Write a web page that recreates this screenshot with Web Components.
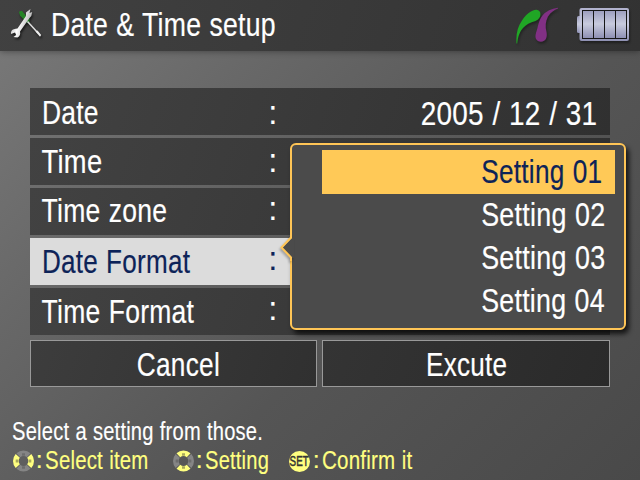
<!DOCTYPE html>
<html lang="en"><head><meta charset="utf-8"><title>Date &amp; Time setup</title>
<style>html,body{margin:0;padding:0;width:640px;height:480px;overflow:hidden;background:#555}</style></head>
<body><setup-screen></setup-screen>
<script>
const define=(name,html,connected)=>{
  const t=document.createElement('template');t.innerHTML=html;
  customElements.define(name,class extends HTMLElement{
    constructor(){super();this.attachShadow({mode:'open'}).append(t.content.cloneNode(true));}
    connectedCallback(){if(connected)connected(this,this.shadowRoot);}
  });
};

// Text condensed horizontally so that its ink fills the given width.
const ctx=document.createElement('canvas').getContext('2d');
define('narrow-text',`<style>
:host{display:block;flex:none;font-family:"Liberation Sans",Arial,sans-serif;white-space:pre;line-height:40px;height:40px}
span{display:block;width:max-content;transform-origin:0 0;-webkit-text-stroke:var(--stroke,0.2px) currentColor}
</style><span></span>`,(el,root)=>{
  const s=root.querySelector('span'),size=+(el.getAttribute('size')||34),w=+el.getAttribute('w');
  const text=el.getAttribute('text'),track=text==='SET'?0:size*.01,gap=size*.02;
  s.textContent=text;s.style.fontSize=size+'px';s.style.letterSpacing=track+'px';s.style.wordSpacing=gap+'px';
  ctx.font=size*10+'px "Liberation Sans"';
  const m=ctx.measureText(text),left=m.actualBoundingBoxLeft/10,right=m.actualBoundingBoxRight/10;
  const natural=right+left+track*(text.length-1)+gap*(text.split(' ').length-1),k=w/natural;
  el.style.width=w+'px';
  s.style.transform=`translateX(${left*k}px) scaleX(${k})`;
});

define('tools-icon',`<style>:host{display:block;width:36px;height:32px}svg{display:block;filter:drop-shadow(1px 2px 1px #0009)}</style>
<svg width="36" height="32" viewBox="0 0 36 32"><defs><linearGradient id="m" x2="1" y2=".4"><stop stop-color="#999"/><stop offset=".5" stop-color="#fff"/><stop offset="1" stop-color="#aaa"/></linearGradient></defs>
<path d="M11 5Q12 3.500 14 4L21 12L18 15L12 8.500Z" fill="#248324"/><path d="M17 12L21.500 11.500L21.500 15L18.500 16Z" fill="#1d7a20"/>
<path d="M19.500 14.500L30 26" stroke="#ddd" stroke-width="1.600"/><path d="M27.500 24.500L29.500 23.500L33.200 28L32 29.700Z" fill="#eee"/>
<path d="M18 9L18 5.500L22.500 2L21.500 6L24.200 5Q24 9 21.500 11L12 24.500Q13 28.500 9.500 30.500L5.500 30L8.200 28L7 25.500L3 27Q2.500 24 5 22.500Q8 21.500 9.500 21.500Z" fill="url(#m)"/></svg>`);

define('brand-mark',`<style>:host{display:block;width:46px;height:38px}svg{display:block;overflow:visible;filter:drop-shadow(1px 2px 1px #0005)}</style>
<svg width="46" height="38" viewBox="0 0 46 38"><path d="M1.500 37.500C.8 28 2.500 21 7 14.500C11 8.500 16 4 21.500 3.800C27 4.200 27 12.500 20.500 15C15 16.500 11 18.500 8 22C4 27 3 31 2.200 37.500Z" fill="#20a625"/>
<path d="M43 1.800Q33 3 27.500 9.500C23.500 14.500 23 21.500 21 27C19.500 31.500 21 35.500 26 35.800C31 35.500 32.500 31 31.500 26C30 20.500 30.500 15.500 33 10.500C36 6 39 4 43 2.500Z" fill="#813084"/></svg>`);

define('battery-icon',`<style>:host{display:block;width:54px;height:36px}svg{display:block;filter:drop-shadow(1px 2px 1px #0006)}</style>
<svg width="54" height="36" viewBox="0 0 54 36"><defs><linearGradient id="b" x2="0" y2="1"><stop stop-color="#b0b1cd"/><stop offset=".5" stop-color="#c8cadf"/><stop offset="1" stop-color="#8e90b2"/></linearGradient>
<linearGradient id="c" x2="0" y2="1"><stop stop-color="#9c9dbe"/><stop offset=".48" stop-color="#c8cbdd"/><stop offset="1" stop-color="#8d8fb3"/></linearGradient></defs>
<rect x="1" y="10" width="5" height="17" rx="1.500" fill="url(#c)"/><rect x="3.500" y="2" width="49.500" height="33" rx="2" fill="url(#b)"/>
<rect x="6.500" y="4.500" width="44" height="28" fill="url(#c)" stroke="#171717"/><path d="M17.500 4.500v28M28.500 4.500v28M39.500 4.500v28" stroke="#171717"/></svg>`);

define('dial-icon',`<style>:host{display:block;width:22px;height:22px}svg{display:block}:host([vertical]) g{transform:rotate(90deg);transform-origin:10.5px 11px}circle{fill:none;stroke-width:5.6}</style>
<svg width="22" height="22" viewBox="0 0 22 22"><g>
<circle cx="10.500" cy="11" r="7.700" pathLength="360" stroke="#ffff80" stroke-dasharray="84 96" stroke-dashoffset="42"/>
<circle cx="10.500" cy="11" r="7.700" pathLength="360" stroke="#858585" stroke-dasharray="84 96" stroke-dashoffset="-48"/>
<path d="M2.700 9.500h2.500v3h-2.500zM15.800 9.500h2.500v3h-2.500z" fill="#a8a85c"/><path d="M9 3.200h3v2.500h-3zM9 16.300h3v2.500h-3z" fill="#6d6d6d"/></g></svg>`);

define('set-icon',`<style>:host{display:grid;width:21px;height:21px;border-radius:50%;background:#ffff80;color:#343434;align-content:center;justify-content:center;--stroke:.5px}narrow-text{height:21px;line-height:21px}</style>
<narrow-text text="SET" size="14.5" w="18.500"></narrow-text>`);

define('menu-row',`<style>
:host{display:flex;height:47px;box-sizing:border-box;padding:0 12px;background:linear-gradient(110deg,#424242,#303030);color:#fff}
:host([selected]){background:#dcdcdc;color:#0d2358}
.label{width:229.300px;flex:none;padding-top:var(--ly,4px)}.colon{width:4px;padding-top:var(--cy,4px)}.value{margin-left:auto;padding-top:5px}
</style><div class="label"><slot></slot></div><div class="colon"><narrow-text text=":" w="3.4"></narrow-text></div><div class="value"><slot name="value"></slot></div>`);

define('push-button',`<style>:host{display:flex;justify-content:center;height:47px;box-sizing:border-box;padding-top:3px;border:1px solid #999;background:linear-gradient(110deg,var(--a),var(--b));color:#fff}</style><slot></slot>`);

define('option-row',`<style>:host{display:flex;height:43px;padding:1px 0 0 160px;box-sizing:border-box;color:#fff}:host([active]){background:#ffc957;color:#0d2358;height:44px;margin-bottom:-1px}</style><slot></slot>`);

define('option-popup',`<style>
:host{display:block;position:absolute;left:290px;top:143px;width:336px;height:187px;box-sizing:border-box;border:2px solid #ffc556;border-radius:6px;background:#4b4b4b;box-shadow:3px 4px 5px #000b;padding:5px 9px 0 30px}
svg{position:absolute;left:-12px;top:90px;filter:drop-shadow(-1px 2px 1px #0004)}
</style><svg width="14" height="26" viewBox="0 0 14 26"><path d="M12 3L2 13L12 23H14V3Z" fill="#4b4b4b"/><path d="M11 0V2.500L1.500 12.500L11 22.500V26" stroke="#ffc556" stroke-width="2" fill="none"/></svg><slot></slot>`);

define('hint-item',`<style>:host{display:flex;align-items:flex-start;color:#ffff80}.colon{width:3px;margin-left:var(--cx,3px)}.label{margin-left:5.500px}.icon{padding-top:var(--iy,10px)}</style>
<div class="icon"><slot name="icon"></slot></div><narrow-text class="colon" text=":" size="24" w="2.500"></narrow-text><div class="label"><slot></slot></div>`);

define('setup-screen',`<style>
:host{display:flex;flex-direction:column;position:relative;width:640px;height:480px;overflow:hidden;background:linear-gradient(135deg,#7a7a7a 0%,#686868 28%,#555 60%,#494949 100%)}
header{display:flex;height:51px;flex:none;background:linear-gradient(110deg,#414141,#323232);color:#fff;box-shadow:0 1px 6px #0005}
header tools-icon{margin:7px 0 0 8px}header narrow-text{margin:4px 0 0 9px}
header brand-mark{margin:6px 0 0 auto}header battery-icon{margin:6px 10px 0 15px}
main{display:flex;flex-direction:column;gap:3px;padding:37px 30px 0}
.buttons{display:grid;grid-template-columns:287px 288px;gap:5px;margin-top:2px}
footer{padding:24px 0 0 13px;color:#fff;--stroke:.15px}
.hints{display:flex;margin-top:-11px}
</style>
<header><tools-icon></tools-icon><narrow-text text="Date &amp; Time setup" w="222"></narrow-text><brand-mark></brand-mark><battery-icon></battery-icon></header>
<main>
<menu-row><narrow-text text="Date" w="53.500" style="margin-left:1.500px"></narrow-text><narrow-text slot="value" text="2005 / 12 / 31" w="174" style="margin-right:2px"></narrow-text></menu-row>
<menu-row style="--ly:3px;--cy:2px"><narrow-text text="Time" w="59"></narrow-text></menu-row>
<menu-row style="--ly:2px;--cy:0px"><narrow-text text="Time zone" w="124"></narrow-text></menu-row>
<menu-row selected style="--ly:3px;--cy:0px"><narrow-text text="Date Format" w="146" style="margin-left:1.500px"></narrow-text></menu-row>
<menu-row style="--ly:3px;--cy:-1px"><narrow-text text="Time Format" w="152"></narrow-text></menu-row>
<div class="buttons"><push-button style="--a:#3d3d3d;--b:#303030"><narrow-text text="Cancel" w="80" style="margin-left:8px"></narrow-text></push-button><push-button style="--a:#343434;--b:#2a2a2a"><narrow-text text="Excute" w="78" style="margin-left:2px"></narrow-text></push-button></div>
</main>
<footer><narrow-text text="Select a setting from those." size="25" w="248"></narrow-text>
<div class="hints"><hint-item style="width:160px"><dial-icon slot="icon"></dial-icon><narrow-text text="Select item" size="25" w="101"></narrow-text></hint-item>
<hint-item style="width:116px"><dial-icon vertical slot="icon"></dial-icon><narrow-text text="Setting" size="25" w="61.500"></narrow-text></hint-item>
<hint-item style="--cx:4.500px;--iy:11px"><set-icon slot="icon"></set-icon><narrow-text text="Confirm it" size="25" w="89"></narrow-text></hint-item></div></footer>
<option-popup>
<option-row active><narrow-text text="Setting 01" w="119"></narrow-text></option-row>
<option-row><narrow-text text="Setting 02" w="122"></narrow-text></option-row>
<option-row><narrow-text text="Setting 03" w="122"></narrow-text></option-row>
<option-row><narrow-text text="Setting 04" w="122"></narrow-text></option-row></option-popup>`);
</script></body></html>
